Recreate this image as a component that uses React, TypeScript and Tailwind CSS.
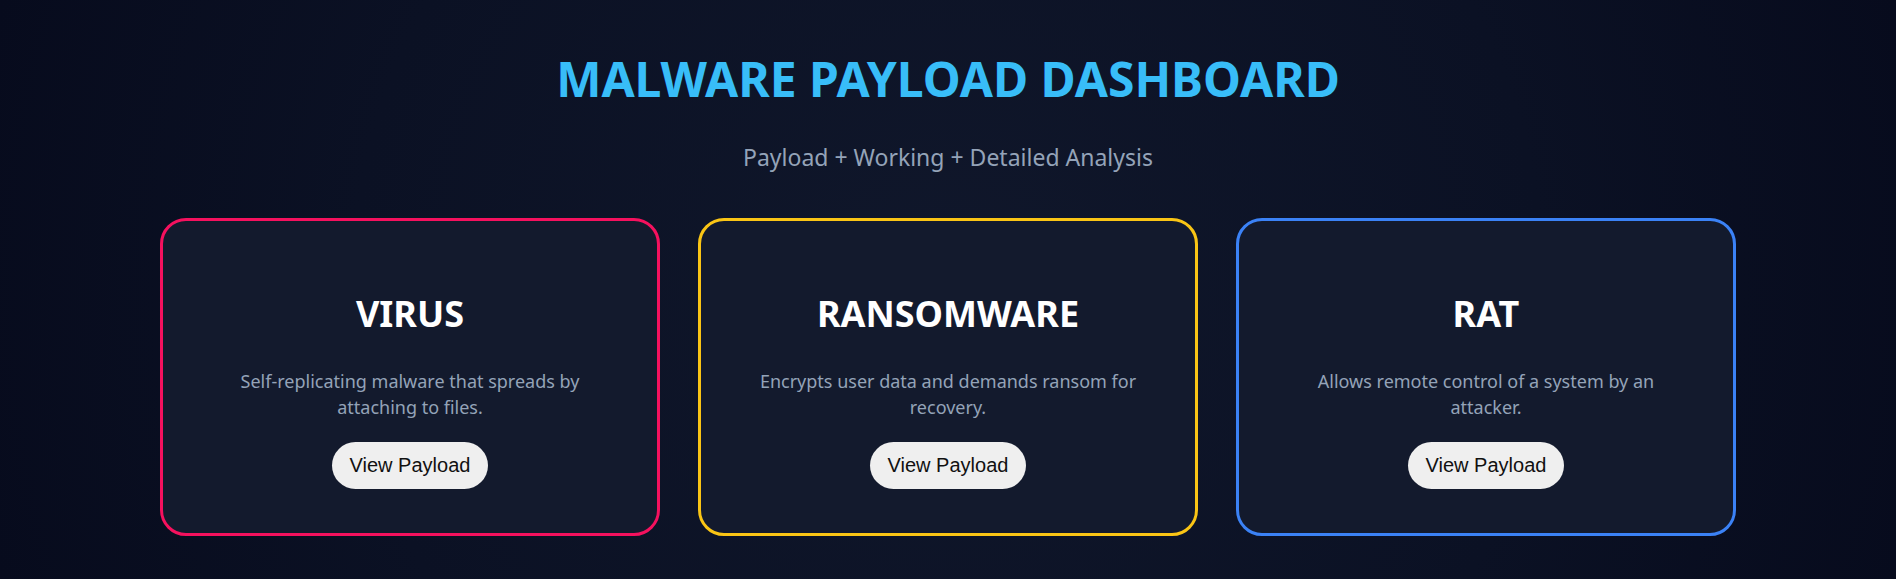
const payloads = [
  {
    name: "VIRUS",
    desc: "Self-replicating malware that spreads by attaching to files.",
    border: "border-[#f5115e]",
  },
  {
    name: "RANSOMWARE",
    desc: "Encrypts user data and demands ransom for recovery.",
    border: "border-[#fac515]",
  },
  {
    name: "RAT",
    desc: "Allows remote control of a system by an attacker.",
    border: "border-[#3b82f6]",
  },
];

const PayloadCard = ($: { name: string; desc: string; border: string }) => (
  <div
    className={
      "w-[500px] rounded-[26px] border-[3px] bg-[#131a2d] px-10 pt-10 pb-[44px] text-center " + $.border
    }
  >
    <h2 className="mt-[35px] text-[36px] leading-none font-bold text-white">{$.name}</h2>
    <p className="mt-[36px] px-2 text-[18px] leading-[26px] text-[#94a3b8]">{$.desc}</p>
    <button className="mt-[22px] rounded-full bg-[#efefef] px-[18px] py-3 font-['Liberation_Sans',Arial,sans-serif] text-[20px] leading-[23px] text-[#111]">
      View Payload
    </button>
  </div>
);

export default function App() {
  return (
    <div className="min-h-screen bg-[radial-gradient(circle_at_center,#10172b_0%,#0b1124_60%,#070b1d_100%)] font-['Noto_Sans',sans-serif]">
      <div className="flex flex-col items-center pt-[55px]">
        <h1 className="text-[48px] leading-none font-bold text-[#38bdf8]">MALWARE PAYLOAD DASHBOARD</h1>
        <p className="mt-[43px] text-[23px] leading-none text-[#94a3b8]">Payload + Working + Detailed Analysis</p>
        <div className="mt-[49px] flex gap-[38px]">
          {payloads.map((v) => (
            <PayloadCard key={v.name} {...v} />
          ))}
        </div>
      </div>
    </div>
  );
}
